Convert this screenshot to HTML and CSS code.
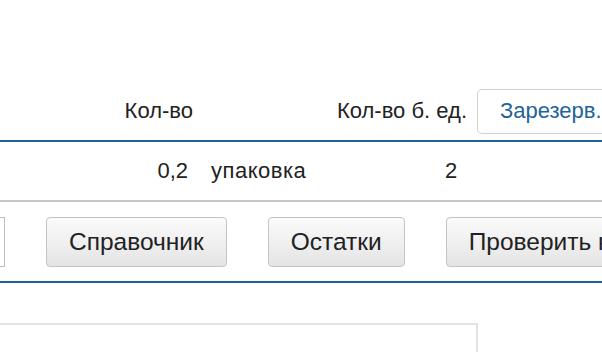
FILE: index.html
```html
<!DOCTYPE html>
<html lang="ru">
<head>
  <meta charset="UTF-8" />
  <title>Позиция</title>
  <link rel="stylesheet" href="styles.css">
</head>
<body>
  <div class="page">
    <div class="row head-row">
      <div class="cell qty">Кол-во</div>
      <div class="cell base-qty">Кол-во б. ед.</div>
      <button class="reserve-btn">Зарезерв.</button>
    </div>

    <div class="row data-row">
      <div class="cell qty-val">0,2</div>
      <div class="cell unit">упаковка</div>
      <div class="cell base-val">2</div>
    </div>

    <div class="row tools-row">
      <div class="search-box"></div>
      <button class="btn">Справочник</button>
      <button class="btn">Остатки</button>
      <button class="btn">Проверить кол-во</button>
    </div>

    <div class="panel"></div>
  </div>
</body>
</html>
```

FILE: styles.css
```css
* {
  margin: 0;
  padding: 0;
  box-sizing: border-box;
}

html, body {
  overflow: hidden;
}

body {
  width: 602px;
  height: 352px;
  background: #fff;
  color: #222;
  font-family: "Liberation Sans", Arial, sans-serif;
  font-size: 22px;
}

.page {
  padding-top: 86px;
}

.row {
  display: flex;
  align-items: center;
  white-space: nowrap;
}

.cell {
  flex-shrink: 0;
}

.head-row {
  height: 56px;
  border-bottom: 2px solid #1d6496;
  padding-bottom: 4px;
}

.qty {
  width: 193px;
  text-align: right;
}

.base-qty {
  width: 274px;
  text-align: right;
}

.reserve-btn {
  margin-left: 10px;
  height: 45px;
  padding: 0 22px;
  flex-shrink: 0;
  font: inherit;
  color: #1f6399;
  background: #fff;
  border: 1px solid #d0d0d0;
  border-radius: 5px;
}

.data-row {
  height: 60px;
  border-bottom: 2px solid #c6c6c6;
}

.qty-val {
  width: 188px;
  text-align: right;
}

.unit {
  width: 257px;
  padding-left: 23px;
  letter-spacing: 0.5px;
}

.tools-row {
  height: 81px;
  gap: 41px;
  border-bottom: 2px solid #1d6496;
}

.search-box {
  width: 5px;
  height: 50px;
  border: 1px solid #bdbdbd;
  border-left: none;
  flex-shrink: 0;
}

.btn {
  height: 50px;
  padding: 0 22px;
  flex-shrink: 0;
  font: inherit;
  font-size: 24.5px;
  color: #222;
  background: linear-gradient(#fbfbfb, #e4e4e4);
  border: 1px solid #c4c4c4;
  border-radius: 4px;
}

.panel {
  margin-top: 40px;
  width: 478px;
  height: 29px;
  border: 2px solid #e2e2e2;
  border-left: none;
  border-bottom: none;
}
```
